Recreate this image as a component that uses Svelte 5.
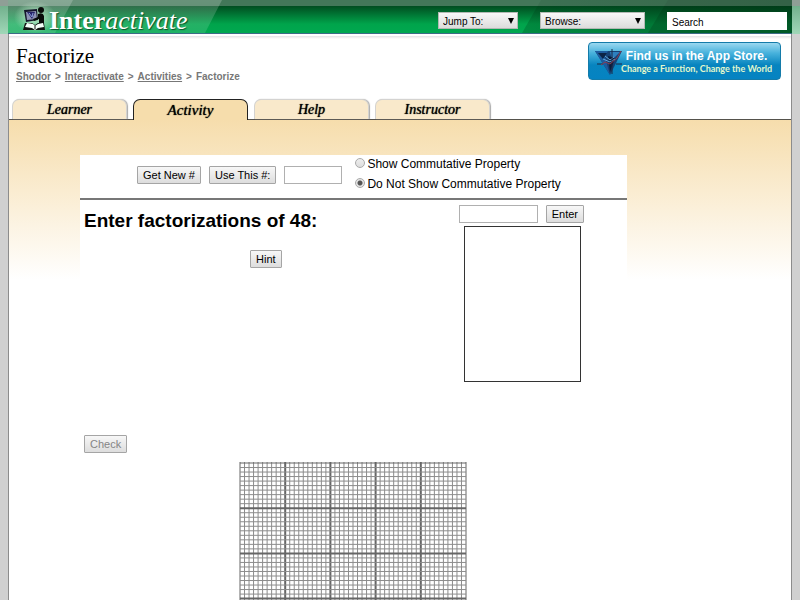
<script>
  const tabs = ['Learner', 'Activity', 'Help', 'Instructor'];
  const crumbs = ['Shodor', 'Interactivate', 'Activities'];
  const cell = 226 / 50;
  const columns = Array.from({ length: 51 }, (_, i) => i);
  const rows = Array.from({ length: 31 }, (_, i) => i);
  let active = $state('Activity');
  let property = $state('hide');
  let search = $state('Search');
</script>

<div class="page">
  <header>
    <svg class="stripes" viewBox="0 0 784 34" preserveAspectRatio="none" aria-hidden="true">
      <defs>
        <linearGradient id="pane" x1="0" x2="0" y1="0" y2="1">
          <stop offset="0" stop-color="#fff" stop-opacity=".2" />
          <stop offset="1" stop-color="#fff" stop-opacity=".12" />
        </linearGradient>
        <linearGradient id="shade" x1="0" x2="1">
          <stop offset="0" stop-color="#003a18" stop-opacity=".25" />
          <stop offset="1" stop-color="#003a18" stop-opacity=".6" />
        </linearGradient>
      </defs>
      <path d="M0 0H214L197 34H0Z" fill="url(#pane)" />
      <path d="M0 0H65L47 34H0Z" fill="url(#pane)" />
      <path d="M533 0H784V34H514Z" fill="url(#shade)" />
      <path d="M660 0H784V34H640Z" fill="#00280f" fill-opacity=".2" />
    </svg>
    <a class="logo" href="#home">
      <svg width="24" height="26" viewBox="0 0 24 26" aria-hidden="true">
        <path d="M2 4l13-1 1 11-12 2z" fill="#14162b" />
        <path d="M4 6l10-1 1 8-10 1z" fill="#8d93b5" />
        <path d="M5 6h8l-3 7z" fill="#27256b" />
        <path d="M7 7l3 4 1-4" stroke="#8da2dc" fill="none" />
        <circle cx="19" cy="4" r="3" fill="#080b09" />
        <path d="M16 8q5-2 6 2v8h-5v-5l-5 2-1-2 5-2z" fill="#080b09" />
        <path d="M3 17h7l3 2 3-2h6l1 7H1z" fill="#101512" />
        <path d="M5 17l6 1 2 2 3-2 5-1 1 4-6 1-3 2-3-2-7-1z" fill="#f4fff8" />
        <path d="M13 20v3" stroke="#111" />
      </svg>
      <span class="word"><b>Inter</b><i>activate</i></span>
    </a>
    <form class="tools" onsubmit={(e) => e.preventDefault()}>
      <span class="pick jump">
        <select aria-label="Jump To"><option>Jump To:</option></select>
        <svg width="6" height="6" viewBox="0 0 6 6" aria-hidden="true"><path d="M0 0h6L3 6z" /></svg>
      </span>
      <span class="pick browse">
        <select aria-label="Browse"><option>Browse:</option></select>
        <svg width="6" height="6" viewBox="0 0 6 6" aria-hidden="true"><path d="M0 0h6L3 6z" /></svg>
      </span>
      <input class="search" type="text" aria-label="Search" bind:value={search} />
    </form>
  </header>

  <div class="sheet">
    <div class="intro">
      <div>
        <h1>Factorize</h1>
        <nav class="crumbs" aria-label="Breadcrumb">
          {#each crumbs as crumb}
            <a href="#{crumb}">{crumb}</a><span>&gt;</span>
          {/each}
          <span>Factorize</span>
        </nav>
      </div>
      <a class="store" href="#store">
        <svg width="30" height="30" viewBox="0 0 30 30" aria-hidden="true">
          <path d="M1 4h27L16 28z" fill="#164275" />
          <path d="M1 4h13l-3 6 5 18z" fill="#1d5c9f" />
          <path d="M4 6h9l-4 6z" fill="#0c2446" />
          <path d="M16 5h10l-8 8z" fill="#2e80bf" />
          <path d="M14 9l7 2-5 14z" fill="#0a1d3c" />
          <path d="M11 9l5 4 4-3M9 12l7 3 5-3" stroke="#64a7d8" fill="none" />
          <path d="M18 2v25M3 17h6M22 17h6" stroke="#1a2742" fill="none" />
          <path d="M7 18l4-3 5 2 7-6 4-7" stroke="#8b3e52" fill="none" />
        </svg>
        <span class="pitch">
          <strong>Find us in the App Store.</strong>
          <span>Change a Function, Change the World</span>
        </span>
      </a>
    </div>

    <nav class="tabs" aria-label="Sections">
      {#each tabs as tab}
        <a href="#{tab}" class:active={active === tab} onclick={() => (active = tab)}>{tab}</a>
      {/each}
    </nav>

    <main>
      <section class="applet">
        <div class="setup">
          <button>Get New #</button>
          <button>Use This #:</button>
          <input class="field number" type="text" aria-label="Number to factor" />
          <div class="choices">
            <label><input type="radio" value="show" bind:group={property} />Show Commutative Property</label>
            <label><input type="radio" value="hide" bind:group={property} />Do Not Show Commutative Property</label>
          </div>
        </div>
        <div class="work">
          <div class="question">
            <h2>Enter factorizations of 48:</h2>
            <button class="hint">Hint</button>
            <button class="check" disabled>Check</button>
          </div>
          <div class="answer">
            <div class="entry">
              <input class="field" type="text" aria-label="Factorization" />
              <button>Enter</button>
            </div>
            <div class="list"></div>
          </div>
        </div>
        <svg class="grid" width="228" height="138" viewBox="0 0 228 138" role="img" aria-label="Grid">
          {#each columns as i}
            <path d="M{1 + i * cell} 0V138" stroke={i % 10 ? '#8c8c8c' : '#666'} stroke-width={i % 10 || i === 0 || i === 50 ? 1 : 2} />
          {/each}
          {#each rows as i}
            <path d="M1 {1 + i * cell}H227" stroke={i % 10 ? '#8c8c8c' : '#666'} stroke-width={i % 10 || i === 0 ? 1 : 2} />
          {/each}
        </svg>
      </section>
    </main>
  </div>
</div>

<style>
  :global(body) {
    margin: 0;
    background: #d0d0d0;
  }
  .page, .page * {
    box-sizing: border-box;
  }
  .page {
    position: relative;
    min-height: 100vh;
    display: flex;
    flex-direction: column;
    padding: 0 8px;
    font-family: "Liberation Sans", Arial, sans-serif;
    color: #000;
  }
  .page::before {
    content: "";
    position: absolute;
    inset: 0 0 auto;
    height: 34px;
    background: linear-gradient(#8f9f96 0 6px, #72b18d 6px, #a0d7b8);
  }
  header {
    position: relative;
    display: flex;
    justify-content: space-between;
    height: 34px;
    padding: 6px 5px 0 14px;
    background: linear-gradient(#1a5a35 0 6px, #004d20 6px, #00a44b 24px, #00a850);
    border-bottom: 1px solid #3c6b86;
  }
  header::after {
    content: "";
    position: absolute;
    inset: 0 0 auto;
    height: 6px;
    background: rgba(255, 255, 255, 0.18);
  }
  .stripes {
    position: absolute;
    left: 0;
    top: 0;
    width: 100%;
    height: 100%;
  }
  .logo {
    position: relative;
    display: flex;
    gap: 3px;
    color: #fff;
    text-decoration: none;
  }
  .logo::before {
    content: "";
    position: absolute;
    left: -8px;
    top: -5px;
    width: 42px;
    height: 32px;
    background: radial-gradient(closest-side, #c5eccf, transparent);
  }
  .logo svg, .word {
    position: relative;
  }
  .word {
    font: 26px/30px "Liberation Serif", "Times New Roman", serif;
    text-shadow: 1px 1px 1px #0a5029;
  }
  .tools {
    position: relative;
    display: flex;
    align-items: flex-start;
    padding-top: 6px;
  }
  .pick {
    position: relative;
    height: 17px;
  }
  .jump {
    width: 80px;
    margin-right: 22px;
  }
  .browse {
    width: 105px;
    margin-right: 22px;
  }
  .pick svg {
    position: absolute;
    right: 4px;
    top: 6px;
    pointer-events: none;
  }
  select, .search {
    display: block;
    width: 100%;
    height: 17px;
    padding: 2px 4px 0;
    border: 1px solid #b4b9b5;
    border-radius: 0;
    appearance: none;
    background: linear-gradient(#f8f8f8, #dcdcdc);
    font: 10px/14px "Liberation Sans", Arial, sans-serif;
    color: #000;
  }
  .search {
    width: 120px;
    height: 18px;
    border-color: #fff;
    background: #fff;
  }
  .sheet {
    position: relative;
    flex: 1;
    background: #fff;
    border: solid #8c8c8c;
    border-width: 0 1px;
  }
  .intro {
    display: flex;
    justify-content: space-between;
    height: 64px;
    padding: 8px 10px 0 7px;
    background: linear-gradient(#fff 0 2px, #e3e3e6 2px, #fff 5px);
  }
  h1 {
    margin: 2px 0 0;
    font: 21px/24px "Liberation Serif", "Times New Roman", serif;
  }
  .crumbs {
    display: flex;
    gap: 4px;
    margin-top: 2px;
    font-size: 10px;
    line-height: 14px;
    font-weight: 700;
    color: #777;
  }
  .crumbs a {
    color: #777;
  }
  .store {
    display: flex;
    align-items: center;
    width: 193px;
    height: 38px;
    padding: 1px 0 0 5px;
    border: 1px solid #147ba9;
    border-radius: 4px;
    background: linear-gradient(#9bd8f0, #48b2dc 10px, #0784bf 22px, #0583c2);
    color: #fff;
    text-decoration: none;
    white-space: nowrap;
  }
  .store svg {
    flex: none;
  }
  .pitch {
    margin-left: -3px;
    text-align: center;
  }
  .pitch strong, .pitch span {
    display: block;
    font-size: 12px;
    line-height: 13px;
  }
  .pitch span {
    font: 700 9px/11px Lato, "Liberation Sans", sans-serif;
    color: #e2f8cc;
  }
  .tabs {
    display: flex;
    align-items: flex-end;
    gap: 6px;
    height: 22px;
    padding-left: 3px;
    border-bottom: 1px solid #55524c;
  }
  .tabs a {
    width: 115px;
    height: 20px;
    border: 1px solid #d4d3d1;
    border-bottom: 0;
    border-radius: 7px 7px 0 0;
    background: #f9e9cb;
    box-shadow: 1px 0 1px #aaa;
    font: italic 14px/20px "Liberation Serif", "Times New Roman", serif;
    text-align: center;
    text-decoration: none;
    text-shadow: 0 0 1px #000;
    color: #000;
  }
  .tabs a.active {
    height: 21px;
    margin-bottom: -1px;
    border-color: #222;
    background: #f6ddac;
    box-shadow: none;
    font-size: 15px;
  }
  main {
    padding: 35px 71px 0;
    background: linear-gradient(#f6ddac, #fff 160px);
  }
  .applet {
    max-width: 547px;
    background: #fff;
  }
  .setup {
    display: flex;
    align-items: center;
    gap: 8px;
    height: 45px;
    padding: 0 0 4px 57px;
    border-bottom: 2px solid #777;
  }
  button {
    height: 18px;
    padding: 1px 5px 0;
    border: 1px solid #a5a5a5;
    border-radius: 1px;
    background: linear-gradient(#f7f7f7, #ddd);
    font: 11px/15px "Liberation Sans", Arial, sans-serif;
    color: #000;
    white-space: nowrap;
  }
  button:disabled {
    color: #858585;
  }
  .field {
    width: 79px;
    height: 18px;
    padding: 1px 4px;
    border: 1px solid #b0b0b0;
    background: #fff;
    font: 11px "Liberation Sans", Arial, sans-serif;
  }
  .number {
    width: 58px;
  }
  .choices {
    padding: 0 0 2px 5px;
    white-space: nowrap;
  }
  .choices label {
    display: flex;
    align-items: center;
    gap: 2px;
    height: 20px;
    font-size: 12px;
  }
  input[type="radio"] {
    appearance: none;
    width: 10px;
    height: 10px;
    margin: 0 0 2px;
    border: 1px solid #aaa;
    border-radius: 50%;
    background: linear-gradient(#eee, #ddd);
  }
  input[type="radio"]:checked {
    background: radial-gradient(#555 0 2px, #e4e4e4 3px);
  }
  .work {
    display: flex;
    justify-content: space-between;
    height: 262px;
    padding: 5px 43px 0 4px;
  }
  .question {
    display: flex;
    flex-direction: column;
    align-items: flex-start;
  }
  h2 {
    margin: 4px 0 0;
    font-size: 19px;
    line-height: 24px;
  }
  .hint {
    margin: 17px 0 0 166px;
  }
  .check {
    margin-top: 167px;
  }
  .entry {
    display: flex;
    gap: 8px;
  }
  .list {
    width: 117px;
    height: 156px;
    margin: 3px 0 0 5px;
    border: 1px solid #333;
  }
  .grid {
    display: block;
    margin-left: 159px;
  }
</style>
